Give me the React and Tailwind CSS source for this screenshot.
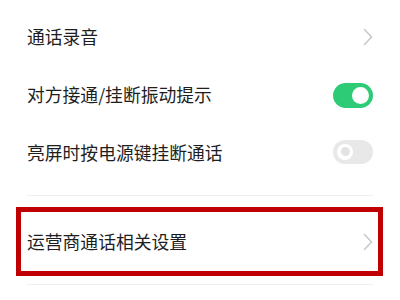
import React from "react";

const font = { fontFamily: '"Noto Sans CJK SC", "Noto Sans", sans-serif' };

function Chevron() {
  return (
    <svg width="10" height="18" viewBox="0 0 10 18" fill="none">
      <path d="M1.5 1.5 L8.5 9 L1.5 16.5" stroke="#c9c9c9" strokeWidth="1.6" strokeLinecap="round" strokeLinejoin="round" />
    </svg>
  );
}

function ToggleOn() {
  return (
    <div className="w-[40px] h-[25px] rounded-full bg-[#2ecb77] flex items-center justify-end pr-[4px]">
      <div className="w-[17px] h-[17px] rounded-full bg-white" />
    </div>
  );
}

function ToggleOff() {
  return (
    <div className="w-[40px] h-[24px] -mt-[3px] rounded-full bg-[#e8e8e8] flex items-center pl-[4px]">
      <div className="w-[16px] h-[16px] rounded-full bg-white flex items-center justify-center">
        <div className="w-[9px] h-[9px] rounded-full bg-[#e3e3e3]" />
      </div>
    </div>
  );
}

function Row({ label, right }) {
  return (
    <div className="h-[58px] flex items-center justify-between">
      <span className="text-[17.8px] text-[#1e1e1e] leading-none">{label}</span>
      <div className="flex items-center">{right}</div>
    </div>
  );
}

export default function App() {
  return (
    <div className="w-[400px] h-[300px] bg-white overflow-hidden" style={font}>
      <div className="pl-[27px] pr-[27px] pt-[8px] flex flex-col">
        <Row label="通话录音" right={<Chevron />} />
        <Row label="对方接通/挂断振动提示" right={<ToggleOn />} />
        <Row label="亮屏时按电源键挂断通话" right={<ToggleOff />} />
        <div className="mt-[13px] h-[1px] bg-[#efefef]" />
        <div className="mt-[11px] -ml-[11px] -mr-[10px] h-[69px] border-[5px] border-[#c00000] pl-[6px] pr-[5px] flex items-center justify-between">
          <span className="text-[17.8px] text-[#1e1e1e] leading-none">运营商通话相关设置</span>
          <Chevron />
        </div>
        <div className="mt-[8px] h-[1px] bg-[#efefef]" />
      </div>
    </div>
  );
}
